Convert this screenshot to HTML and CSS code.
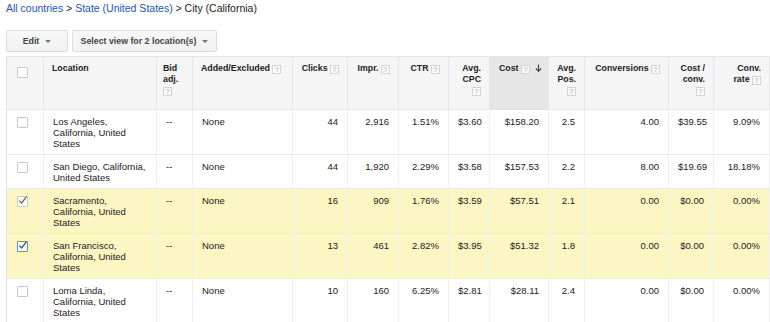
FILE: index.html
```html
<!DOCTYPE html>
<html>
<head>
<meta charset="utf-8">
<link rel="stylesheet" href="styles.css">
</head>
<body>
<div class="page">
  <div class="crumbs"><a href="#">All countries</a> &gt; <a href="#">State (United States)</a> &gt; City (California)</div>
  <div class="toolbar">
    <button class="btn btn-edit">Edit<span class="caret"></span></button>
    <button class="btn btn-view">Select view for 2 location(s)<span class="caret"></span></button>
  </div>
  <table class="grid">
    <colgroup>
      <col class="w-check"><col class="w-loc"><col class="w-bid"><col class="w-added"><col class="w-clicks"><col class="w-impr"><col class="w-ctr"><col class="w-cpc"><col class="w-cost"><col class="w-pos"><col class="w-conv"><col class="w-cpa"><col class="w-rate">
    </colgroup>
    <thead>
      <tr>
        <th class="chk"><span class="cb"></span></th>
        <th class="l">Location</th>
        <th class="l bid">Bid<br>adj.<br><span class="help">?</span></th>
        <th class="l">Added/Excluded <span class="help">?</span></th>
        <th>Clicks <span class="help">?</span></th>
        <th>Impr. <span class="help">?</span></th>
        <th>CTR <span class="help">?</span></th>
        <th>Avg.<br>CPC<br><span class="help">?</span></th>
        <th class="sorted">Cost <span class="help">?</span><svg class="sort" width="7" height="8" viewBox="0 0 7 8"><path d="M3.5 0.5V7" stroke="#444" stroke-width="1.2"/><path d="M0.8 4.3L3.5 7.3L6.2 4.3" fill="none" stroke="#444" stroke-width="1.2"/></svg></th>
        <th>Avg.<br>Pos.<br><span class="help">?</span></th>
        <th>Conversions <span class="help">?</span></th>
        <th>Cost /<br>conv.<br><span class="help">?</span></th>
        <th>Conv.<br>rate <span class="help">?</span></th>
      </tr>
    </thead>
    <tbody>
      <tr>
        <td class="chk"><span class="cb"></span></td>
        <td class="l">Los Angeles,<br>California, United<br>States</td>
        <td class="l">--</td>
        <td class="l">None</td>
        <td>44</td><td>2,916</td><td>1.51%</td><td>$3.60</td><td>$158.20</td><td>2.5</td><td>4.00</td><td>$39.55</td><td>9.09%</td>
      </tr>
      <tr>
        <td class="chk"><span class="cb"></span></td>
        <td class="l">San Diego, California,<br>United States</td>
        <td class="l">--</td>
        <td class="l">None</td>
        <td>44</td><td>1,920</td><td>2.29%</td><td>$3.58</td><td>$157.53</td><td>2.2</td><td>8.00</td><td>$19.69</td><td>18.18%</td>
      </tr>
      <tr class="sel">
        <td class="chk"><span class="cb"><svg width="11" height="11" viewBox="0 0 11 11"><path d="M2.3 5.6L4.6 7.9L9.6 1.6" fill="none" stroke="#666" stroke-width="1.3"/></svg></span></td>
        <td class="l">Sacramento,<br>California, United<br>States</td>
        <td class="l">--</td>
        <td class="l">None</td>
        <td>16</td><td>909</td><td>1.76%</td><td>$3.59</td><td>$57.51</td><td>2.1</td><td>0.00</td><td>$0.00</td><td>0.00%</td>
      </tr>
      <tr class="sel">
        <td class="chk"><span class="cb focus"><svg width="11" height="11" viewBox="0 0 11 11"><path d="M2.3 5.6L4.6 7.9L9.6 1.6" fill="none" stroke="#555" stroke-width="1.3"/></svg></span></td>
        <td class="l">San Francisco,<br>California, United<br>States</td>
        <td class="l">--</td>
        <td class="l">None</td>
        <td>13</td><td>461</td><td>2.82%</td><td>$3.95</td><td>$51.32</td><td>1.8</td><td>0.00</td><td>$0.00</td><td>0.00%</td>
      </tr>
      <tr>
        <td class="chk"><span class="cb"></span></td>
        <td class="l">Loma Linda,<br>California, United<br>States</td>
        <td class="l">--</td>
        <td class="l">None</td>
        <td>10</td><td>160</td><td>6.25%</td><td>$2.81</td><td>$28.11</td><td>2.4</td><td>0.00</td><td>$0.00</td><td>0.00%</td>
      </tr>
    </tbody>
  </table>
</div>
</body>
</html>
```
FILE: styles.css
```css
body {
  margin: 0;
  background: #fff;
  color: #222;
  font-family: "Liberation Sans", Arial, sans-serif;
}
.page {
  padding: 2px 0 0 6px;
}
.crumbs {
  font-size: 10.5px;
  line-height: 12px;
  color: #222;
}
.crumbs a {
  color: #1a55c0;
  text-decoration: none;
}
.toolbar {
  display: flex;
  gap: 4px;
  margin-top: 16px;
}
.btn {
  height: 22px;
  padding: 0;
  border: 1px solid #dcdcdc;
  border-radius: 2px;
  background: linear-gradient(#f8f8f8, #f1f1f1);
  color: #444;
  font-family: "Liberation Sans", Arial, sans-serif;
  font-weight: bold;
  font-size: 8.8px;
  display: flex;
  align-items: center;
  justify-content: center;
}
.btn-edit { width: 62px; }
.btn-view { width: 145px; }
.caret {
  display: inline-block;
  margin-left: 6px;
  width: 0;
  height: 0;
  border-left: 3px solid transparent;
  border-right: 3px solid transparent;
  border-top: 3px solid #777;
}
.grid {
  margin-top: 4px;
  border-collapse: collapse;
  table-layout: fixed;
  width: 763px;
}
.w-check { width: 37px; }
.w-loc { width: 113px; }
.w-bid { width: 36px; }
.w-added { width: 100px; }
.w-clicks { width: 55px; }
.w-impr { width: 51px; }
.w-ctr { width: 50px; }
.w-cpc { width: 41px; }
.w-cost { width: 59px; }
.w-pos { width: 36px; }
.w-conv { width: 84px; }
.w-cpa { width: 45px; }
.w-rate { width: 56px; }

.grid th {
  height: 53px;
  box-sizing: border-box;
  background: #f5f5f5;
  border: 1px solid #e6e6e6;
  vertical-align: top;
  padding: 6px 8px 0 8px;
  text-align: right;
  font-weight: bold;
  font-size: 8.8px;
  line-height: 11px;
  color: #222;
}
.grid th.sorted {
  background: #e6e6e6;
  white-space: nowrap;
  padding-left: 4px;
  padding-right: 6px;
}
.grid th.bid {
  padding-left: 6px;
}
.sort {
  display: inline-block;
  vertical-align: -1px;
  margin-left: 5px;
}
.help {
  display: inline-block;
  box-sizing: border-box;
  width: 9px;
  height: 9px;
  border: 1px solid #d4d4d4;
  background: #fafafa;
  color: #aaa;
  font-size: 7px;
  line-height: 7px;
  text-align: center;
  font-weight: normal;
  vertical-align: -1px;
}
.grid td {
  background: #fff;
  border-left: 1px solid #f0f0f0;
  border-right: 1px solid #f0f0f0;
  border-bottom: 1px solid #ebebeb;
  vertical-align: top;
  padding: 6px 9px 5px 9px;
  text-align: right;
  font-size: 9.5px;
  line-height: 11px;
  color: #222;
}
.grid tr.sel td {
  background: #fcf6c3;
}
.grid td:first-child,
.grid th:first-child {
  border-left: 1px solid #e2e2e2;
}
.grid .l {
  text-align: left;
}
.grid th.chk {
  padding: 10px 0 0 10px;
  text-align: left;
}
.grid td.chk {
  padding: 7px 0 0 10px;
  text-align: left;
}
.cb {
  display: block;
  box-sizing: border-box;
  width: 11px;
  height: 11px;
  border: 1px solid #c8c8c8;
  border-radius: 1px;
  background: #fff;
  position: relative;
}
.cb svg {
  position: absolute;
  left: -1px;
  top: -2px;
}
.cb.focus {
  border-color: #4d90fe;
}
```
